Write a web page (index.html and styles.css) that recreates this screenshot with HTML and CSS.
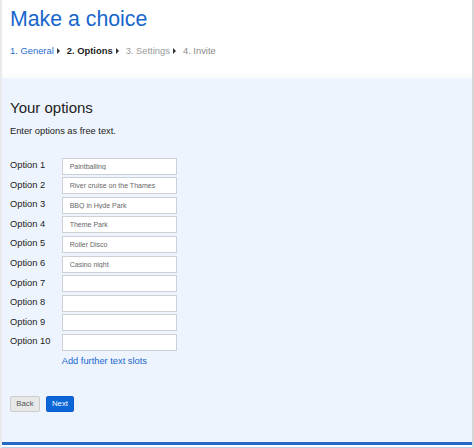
FILE: index.html
```html
<!DOCTYPE html>
<html>
<head>
<meta charset="utf-8">
<link rel="stylesheet" href="styles.css">
</head>
<body>
<div class="page">
  <header class="top">
    <h1 class="title">Make a choice</h1>
    <nav class="steps">
      <a class="step step-done">1. General</a><span class="arrow"></span>
      <span class="step step-current">2. Options</span><span class="arrow"></span>
      <span class="step step-todo">3. Settings</span><span class="arrow"></span>
      <span class="step step-todo2">4. Invite</span>
    </nav>
  </header>
  <main class="content">
    <h2 class="heading">Your options</h2>
    <p class="intro">Enter options as free text.</p>
    <div class="options">
      <label class="opt-label">Option 1</label><input class="opt-input" type="text" value="Paintballing">
      <label class="opt-label">Option 2</label><input class="opt-input" type="text" value="River cruise on the Thames">
      <label class="opt-label">Option 3</label><input class="opt-input" type="text" value="BBQ in Hyde Park">
      <label class="opt-label">Option 4</label><input class="opt-input" type="text" value="Theme Park">
      <label class="opt-label">Option 5</label><input class="opt-input" type="text" value="Roller Disco">
      <label class="opt-label">Option 6</label><input class="opt-input" type="text" value="Casino night">
      <label class="opt-label">Option 7</label><input class="opt-input" type="text" value="">
      <label class="opt-label">Option 8</label><input class="opt-input" type="text" value="">
      <label class="opt-label">Option 9</label><input class="opt-input" type="text" value="">
      <label class="opt-label">Option 10</label><input class="opt-input" type="text" value="">
      <span></span><a class="more">Add further text slots</a>
    </div>
    <div class="buttons">
      <button class="btn btn-back">Back</button>
      <button class="btn btn-next">Next</button>
    </div>
  </main>
  <div class="footer"></div>
</div>
</body>
</html>
```

FILE: styles.css
```css
html, body {
  margin: 0;
  padding: 0;
  background: #ffffff;
}
body {
  font-family: "Liberation Sans", Arial, sans-serif;
  color: #222;
}
.page {
  box-sizing: border-box;
  width: 474px;
  height: 448px;
  display: flex;
  flex-direction: column;
  border-left: 2px solid #e8eaee;
  border-right: 2px solid #d6d6d6;
}
.top {
  box-sizing: border-box;
  height: 78px;
  padding: 7.4px 0 0 8px;
  background: #ffffff;
  border-bottom: 5px solid #fcfcfc;
}
.title {
  margin: 0;
  font-size: 21.3px;
  line-height: 24px;
  font-weight: normal;
  color: #1766cc;
}
.steps {
  margin-top: 14.6px;
  font-size: 9.4px;
  line-height: 10px;
  display: flex;
  align-items: center;
}
.step-done { color: #2a6ccc; }
.step-current { color: #222; font-weight: bold; }
.step-todo { color: #9a9a9a; }
.step-todo2 { color: #8a8a8a; }
.arrow {
  width: 0;
  height: 0;
  border-left: 3.5px solid #333;
  border-top: 3px solid transparent;
  border-bottom: 3px solid transparent;
  margin: 0 7px 0 3px;
}
.content {
  flex: 1;
  background: #eef4fd;
  padding: 20.6px 0 0 8px;
}
.heading {
  margin: 0;
  font-size: 15px;
  line-height: 17px;
  font-weight: normal;
  color: #222;
}
.intro {
  margin: 10.6px 0 0;
  font-size: 9.3px;
  line-height: 10px;
  color: #222;
}
.options {
  margin-top: 21.5px;
  display: grid;
  grid-template-columns: 51.7px 115px;
  row-gap: 2.6px;
  align-items: start;
}
.opt-label {
  font-size: 9.3px;
  line-height: 10px;
  padding-top: 2.3px;
  color: #222;
}
.opt-input {
  box-sizing: border-box;
  width: 115px;
  height: 17px;
  margin: 0;
  padding: 0 0 0 7px;
  border: 1px solid #cdd0d4;
  background: #ffffff;
  font-family: "Liberation Sans", Arial, sans-serif;
  font-size: 7px;
  color: #666;
  outline: none;
}
.more {
  margin-top: 2px;
  font-size: 9.3px;
  line-height: 10px;
  color: #1a66cc;
  text-decoration: none;
}
.buttons {
  margin-top: 30.8px;
  display: flex;
  gap: 6px;
}
.btn {
  box-sizing: border-box;
  height: 16px;
  padding: 0;
  border-radius: 2px;
  font-family: "Liberation Sans", Arial, sans-serif;
  font-size: 7.8px;
  line-height: 14px;
  text-align: center;
}
.btn-back {
  width: 30px;
  background: #e8e8e8;
  border: 1px solid #cccccc;
  color: #555;
}
.btn-next {
  width: 28px;
  background: #0b66d8;
  border: 1px solid #0a5cc6;
  color: #ffffff;
}
.footer {
  height: 2px;
  border-top: 3px solid #2767c6;
  border-bottom: 1px solid #b8cdee;
  background: #ffffff;
}
```
